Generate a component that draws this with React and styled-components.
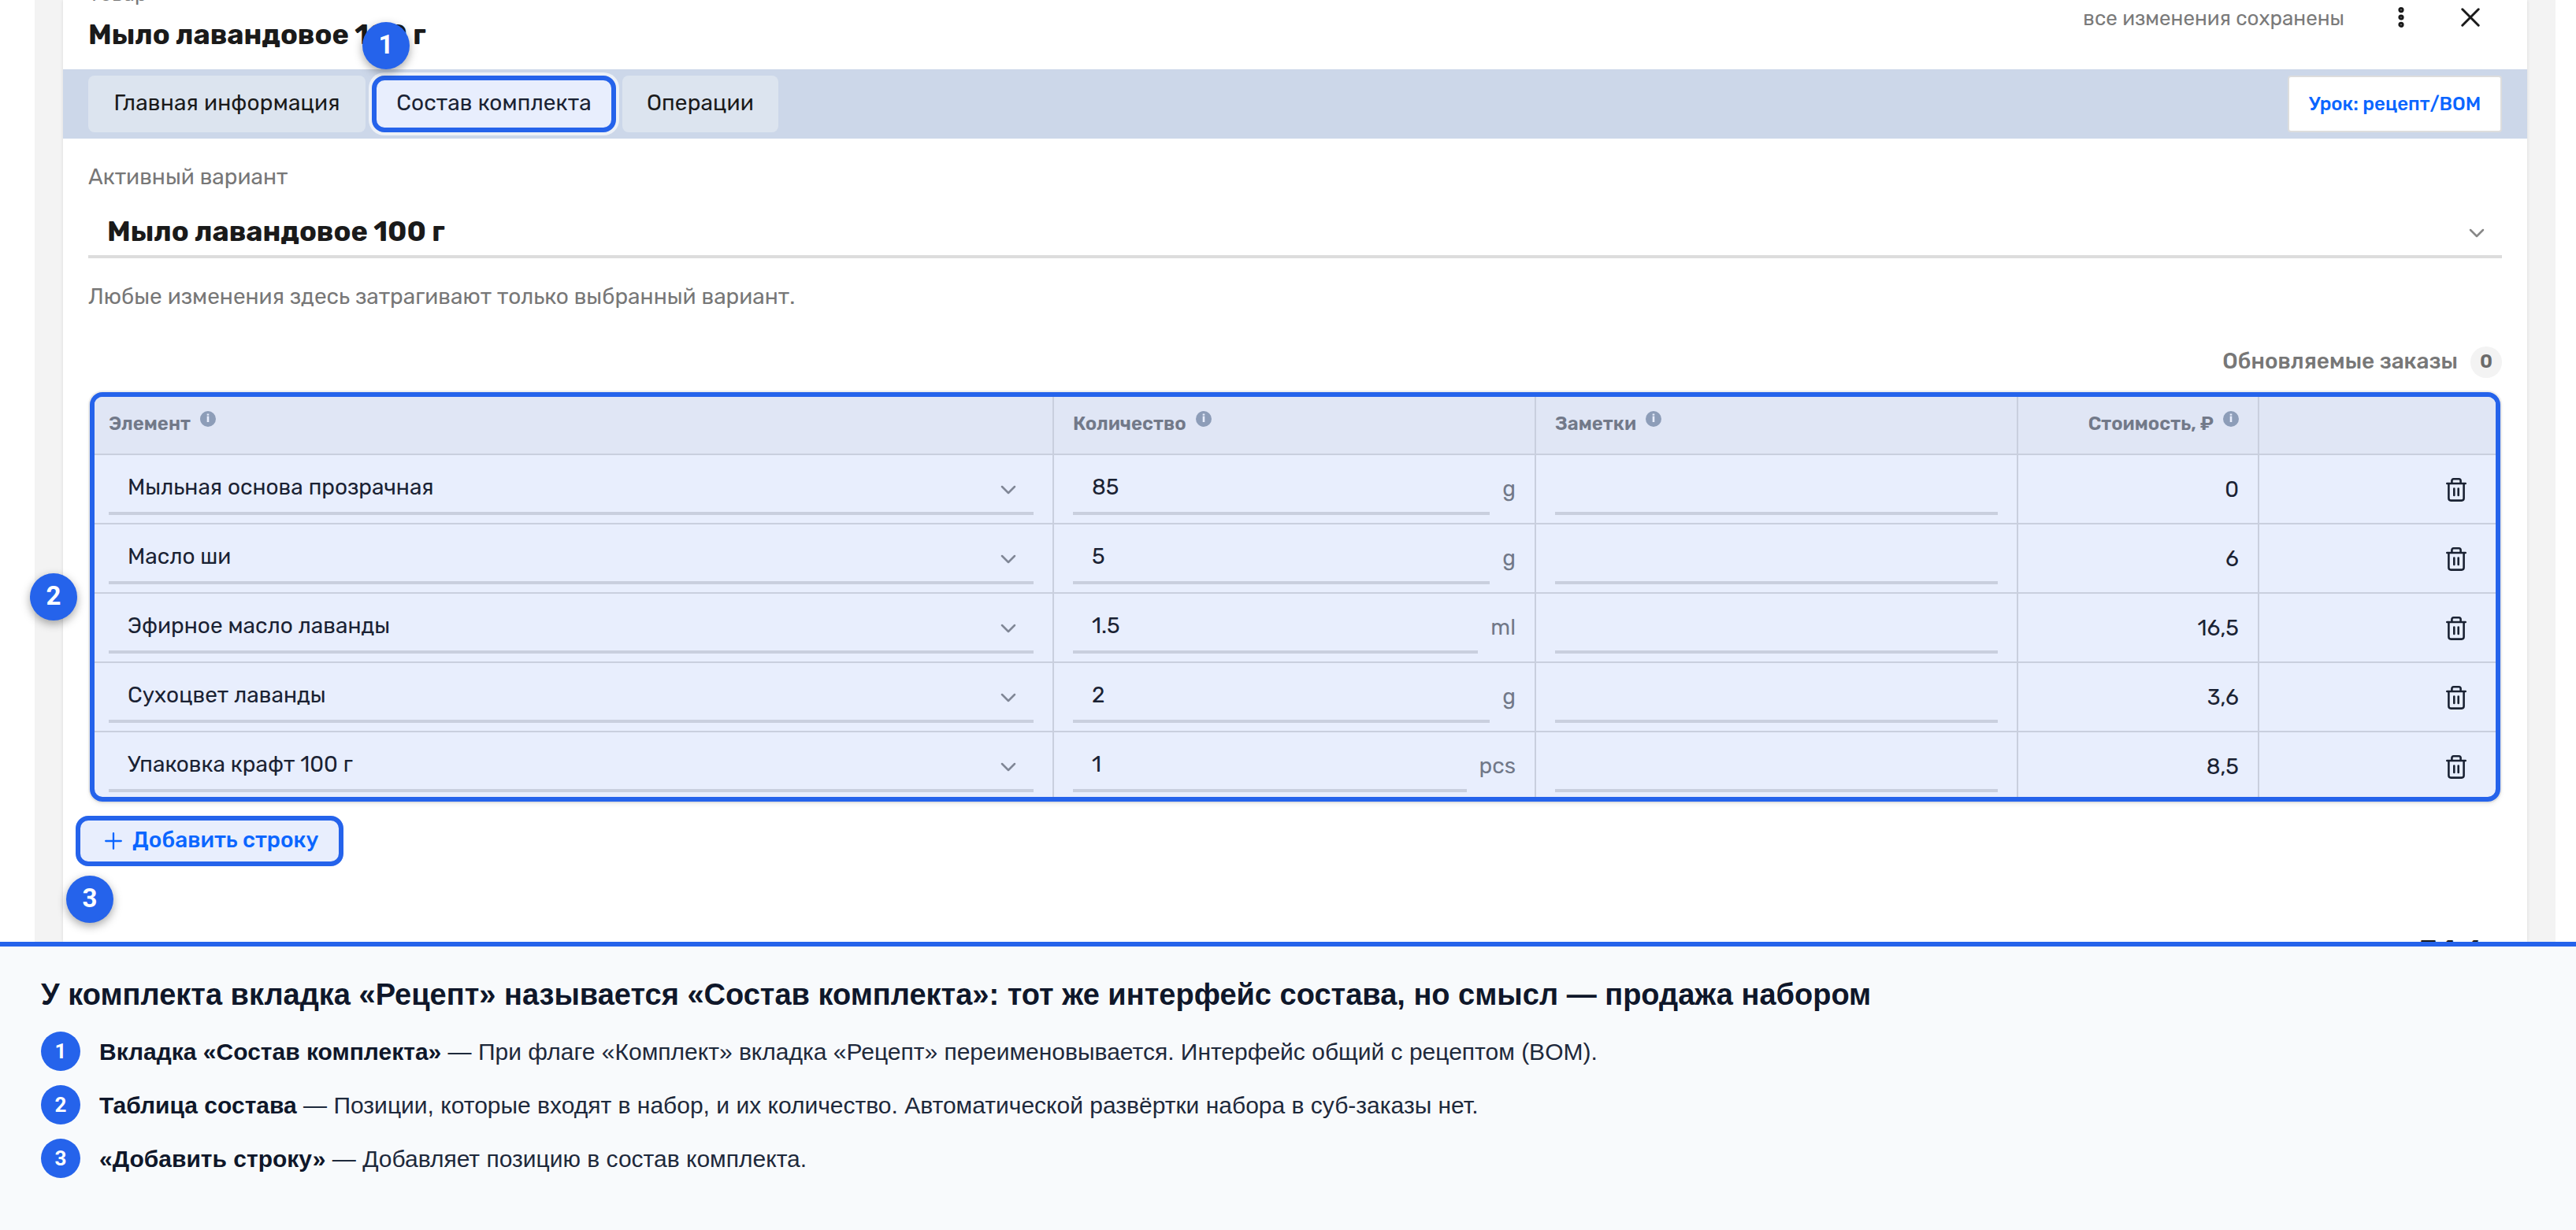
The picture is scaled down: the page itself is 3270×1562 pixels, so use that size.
import styled, { createGlobalStyle } from 'styled-components'

const GlobalStyle = createGlobalStyle`
  * { box-sizing: border-box; }
  body {
    margin: 0;
    background: #fff;
    font-family: Rubik, Roboto, sans-serif;
    font-size: 28px;
    line-height: 40px;
    color: #1a1a1a;
  }
`

const Page = styled.div`
  display: flex;
  flex-direction: column;
  height: 1562px;
  overflow: hidden;
`
const Screen = styled.div`
  display: flex;
  height: 1196px;
  margin: 0 26px 0 44px;
  padding: 0 36px;
  background: #f3f3f3;
`
const Card = styled.div`
  flex: 1;
  height: 1196px;
  background: #fff;
  box-shadow: 0 0 4px rgba(0, 0, 0, 0.1);
  clip-path: inset(0 -80px 0 -80px);
`

const Header = styled.header`
  display: flex;
  justify-content: space-between;
  align-items: flex-start;
  height: 88px;
  padding: 0 28px 0 32px;
`
const Heading = styled.div`
  margin-top: -23px;
`
const Kind = styled.div`
  margin-bottom: 13px;
  font-size: 26px;
  line-height: 32px;
  color: #777;
`
const Title = styled.h1`
  margin: 0;
  font-size: 36px;
  font-weight: 700;
  letter-spacing: -0.1px;
  line-height: 44px;
`
const HeaderActions = styled.div`
  display: flex;
  align-items: center;
  height: 44px;
`
const SaveState = styled.span`
  margin-right: 28px;
  padding-top: 3px;
  font-size: 26px;
  color: #7a7a7a;
`
const IconButton = styled.button`
  display: flex;
  align-items: center;
  justify-content: center;
  width: 88px;
  height: 44px;
  padding: 0;
  border: 0;
  background: none;
  color: #1a1a1a;
`

const TabBar = styled.nav`
  display: flex;
  gap: 8px;
  height: 88px;
  padding: 8px 32px;
  background: #ccd7e9;
`
const Tab = styled.div`
  position: relative;
  display: flex;
  align-items: center;
  justify-content: center;
  width: ${(p) => p.$width}px;
  height: 72px;
  padding-bottom: 2px;
  border-radius: 8px;
  background: #dce4ef;
  letter-spacing: 0.15px;
`
const ActiveTab = styled(Tab)`
  border: 6px solid #2563eb;
  border-radius: 16px;
  background: #e8eefd;
  box-shadow: 0 0 0 4px rgba(255, 255, 255, 0.65);
  color: #1a2233;
`
const LessonButton = styled.button`
  width: 272px;
  height: 72px;
  margin-left: auto;
  padding: 0;
  border: 2px solid #ddd;
  border-radius: 4px;
  background: #fff;
  font-family: inherit;
  font-size: 24px;
  font-weight: 500;
  color: #0b66ff;
`

const Marker = styled.span`
  position: absolute;
  left: ${(p) => p.$left}px;
  top: ${(p) => p.$top}px;
  z-index: 2;
  width: 60px;
  height: 60px;
  border-radius: 50%;
  background: #2563eb;
  box-shadow: 0 4px 12px rgba(0, 0, 0, 0.35);
  font-family: Roboto, sans-serif;
  font-size: 33px;
  font-weight: 700;
  letter-spacing: 0;
  line-height: 58px;
  text-align: center;
  color: #fff;
`

const Body = styled.main`
  padding: 29px 32px 0;
`
const Muted = styled.div`
  color: #777;
`
const VariantSelect = styled.div`
  display: flex;
  align-items: center;
  justify-content: space-between;
  height: 65px;
  margin: 18px 0 29px;
  padding: 0 22px 0 24px;
  border-bottom: 4px solid #ddd;
  font-size: 36px;
  font-weight: 700;
  letter-spacing: -0.1px;
`
const Orders = styled.div`
  display: flex;
  justify-content: flex-end;
  align-items: center;
  gap: 16px;
  height: 40px;
  margin: 43px 0 18px;
  font-weight: 500;
  color: #777;
`
const OrdersLabel = styled.span`
  padding-bottom: 3px;
`
const Count = styled.span`
  width: 40px;
  height: 40px;
  border-radius: 50%;
  background: #f3f3f3;
  font-size: 24px;
  font-weight: 600;
  line-height: 39px;
  text-align: center;
  color: #6b6b6b;
`

const TableWrap = styled.section`
  position: relative;
  margin: 0 2px;
`
const Table = styled.div`
  height: 520px;
  border: 6px solid #2563eb;
  border-radius: 16px;
  background: #e8eefd;
  box-shadow: 0 0 0 2px rgba(0, 0, 0, 0.06), 0 3px 6px rgba(0, 0, 0, 0.08);
  overflow: hidden;
`
const Row = styled.div`
  display: grid;
  grid-template-columns: 1218px 612px 612px 306px 1fr;
  height: ${(p) => (p.$head ? 74 : 88)}px;
  border-bottom: 2px solid #c9cfde;
  background: ${(p) => (p.$head ? '#e0e6f5' : 'transparent')};
`
const Cell = styled.div`
  display: flex;
  align-items: ${(p) => (p.$center ? 'center' : 'flex-start')};
  justify-content: ${(p) => (p.$end ? 'flex-end' : 'flex-start')};
  gap: 16px;
  padding: ${(p) => (p.$center ? 1 : 0)}px 24px 0;
  border-right: 2px solid #c9cfde;
  color: #1a2233;
  &:first-child { padding-left: 18px; }
  &:last-child { padding-right: 37px; border-right: 0; }
`
const HeadCell = styled(Cell)`
  align-items: center;
  gap: 12px;
  padding-bottom: 4px;
  font-size: 24px;
  font-weight: 600;
  color: #727989;
  svg { margin-top: -12px; }
`
const Field = styled.div`
  display: flex;
  flex: 1;
  align-items: center;
  justify-content: space-between;
  height: 76px;
  padding: 10px 22px 0 24px;
  border-bottom: 4px solid #c9cfde;
`
const Unit = styled.span`
  padding-top: 23px;
  color: #717888;
`

const AddRow = styled.button`
  position: relative;
  display: flex;
  align-items: center;
  gap: 13px;
  width: 340px;
  height: 64px;
  margin: 18px 0 0 -16px;
  padding: 0 0 0 31px;
  border: 6px solid #2563eb;
  border-radius: 16px;
  background: #e8eefd;
  font-family: inherit;
  font-size: 28px;
  font-weight: 500;
  color: #0b66ff;
`
const AddLabel = styled.span`
  padding-bottom: 3px;
`
const Total = styled.div`
  margin-top: 85px;
  padding-right: 24px;
  font-size: 36px;
  font-weight: 700;
  line-height: 44px;
  text-align: right;
`

const Legend = styled.footer`
  position: relative;
  z-index: 1;
  height: 366px;
  padding: 39px 52px 0;
  border-top: 6px solid #2563eb;
  background: #f8fafc;
  font-family: "Liberation Sans", Arial, sans-serif;
  color: #1e293b;
`
const LegendTitle = styled.h2`
  margin: 0 0 25px;
  font-size: 38px;
  line-height: 44px;
  color: #0f172a;
`
const LegendItem = styled.div`
  display: flex;
  align-items: center;
  gap: 24px;
  height: 50px;
  margin-bottom: 18px;
  font-size: 30px;
  b { color: #0f172a; }
`
const LegendText = styled.span`
  padding-top: 1px;
`
const LegendNumber = styled.span`
  width: 50px;
  height: 50px;
  border-radius: 50%;
  background: #2563eb;
  font-family: Roboto, sans-serif;
  font-size: 26px;
  font-weight: 700;
  line-height: 50px;
  text-align: center;
  color: #fff;
`

const DotsIcon = () => (
  <svg width="8" height="28" viewBox="0 0 8 28" fill="none" stroke="currentColor" strokeWidth="3">
    <circle cx="4" cy="4.6" r="2.1" />
    <circle cx="4" cy="14" r="2.1" />
    <circle cx="4" cy="23.3" r="2.1" />
  </svg>
)

const CloseIcon = () => (
  <svg width="24" height="24" viewBox="0 0 24 24" stroke="currentColor" strokeWidth="3" strokeLinecap="round">
    <path d="M1.8 1.8l20.4 20.4M22.2 1.8L1.8 22.2" />
  </svg>
)

const ChevronIcon = styled(({ className }) => (
  <svg className={className} width="20" height="12" viewBox="0 0 20 12" fill="none" stroke="currentColor" strokeWidth="2.5" strokeLinecap="round" strokeLinejoin="round">
    <path d="M2 2l8 8 8-8" />
  </svg>
))`
  margin-top: ${(p) => p.$shift || 5}px;
  color: ${(p) => p.$color || '#808796'};
`

const InfoIcon = () => (
  <svg width="20" height="20" viewBox="0 0 20 20">
    <circle cx="10" cy="10" r="10" fill="#8d9db8" />
    <path d="M8.7 3.4h2.6v2H8.7zM8.7 6.4h2.6v7.6H8.7z" fill="#e8eefd" />
  </svg>
)

const TrashIcon = () => (
  <svg width="26" height="30" viewBox="0 0 26 30" fill="none" stroke="currentColor" strokeWidth="2.6" strokeLinecap="round">
    <path d="M1.3 7h23.4M7.4 6.8V3.6q0-2.3 2.3-2.3h6.6q2.3 0 2.3 2.3v3.2" />
    <path d="M3.4 7.2v18.6q0 2.8 2.8 2.8h13.6q2.8 0 2.8-2.8V7.2M10.3 13.5v8.4M15.7 13.5v8.4" />
  </svg>
)

const PlusIcon = () => (
  <svg width="22" height="22" viewBox="0 0 22 22" stroke="currentColor" strokeWidth="2.3" strokeLinecap="round">
    <path d="M11 1.2v19.6M1.2 11h19.6" />
  </svg>
)

const rows = [
  { name: 'Мыльная основа прозрачная', qty: '85', unit: 'g', cost: '0' },
  { name: 'Масло ши', qty: '5', unit: 'g', cost: '6' },
  { name: 'Эфирное масло лаванды', qty: '1.5', unit: 'ml', cost: '16,5' },
  { name: 'Сухоцвет лаванды', qty: '2', unit: 'g', cost: '3,6' },
  { name: 'Упаковка крафт 100 г', qty: '1', unit: 'pcs', cost: '8,5' },
]

const legend = [
  ['Вкладка «Состав комплекта»', 'При флаге «Комплект» вкладка «Рецепт» переименовывается. Интерфейс общий с рецептом (BOM).'],
  ['Таблица состава', 'Позиции, которые входят в набор, и их количество. Автоматической развёртки набора в суб-заказы нет.'],
  ['«Добавить строку»', 'Добавляет позицию в состав комплекта.'],
]

export default function App() {
  return (
    <Page>
      <GlobalStyle />
      <Screen>
        <Card>
          <Header>
            <Heading>
              <Kind>Товар</Kind>
              <Title>Мыло лавандовое 100 г</Title>
            </Heading>
            <HeaderActions>
              <SaveState>все изменения сохранены</SaveState>
              <IconButton><DotsIcon /></IconButton>
              <IconButton><CloseIcon /></IconButton>
            </HeaderActions>
          </Header>
          <TabBar>
            <Tab $width={352}>Главная информация</Tab>
            <ActiveTab $width={310}>
              Состав комплекта
              <Marker $left={-18} $top={-74}>1</Marker>
            </ActiveTab>
            <Tab $width={198}>Операции</Tab>
            <LessonButton>Урок: рецепт/BOM</LessonButton>
          </TabBar>
          <Body>
            <Muted>Активный вариант</Muted>
            <VariantSelect>
              Мыло лавандовое 100 г
              <ChevronIcon $color="#888" />
            </VariantSelect>
            <Muted>Любые изменения здесь затрагивают только выбранный вариант.</Muted>
            <Orders>
              <OrdersLabel>Обновляемые заказы</OrdersLabel>
              <Count>0</Count>
            </Orders>
            <TableWrap>
              <Table>
                <Row $head>
                  <HeadCell>Элемент <InfoIcon /></HeadCell>
                  <HeadCell>Количество <InfoIcon /></HeadCell>
                  <HeadCell>Заметки <InfoIcon /></HeadCell>
                  <HeadCell $end>Стоимость, ₽ <InfoIcon /></HeadCell>
                  <HeadCell />
                </Row>
                {rows.map((row) => (
                  <Row key={row.name}>
                    <Cell><Field>{row.name}<ChevronIcon $shift={6} /></Field></Cell>
                    <Cell>
                      <Field>{row.qty}</Field>
                      <Unit>{row.unit}</Unit>
                    </Cell>
                    <Cell><Field /></Cell>
                    <Cell $center $end>{row.cost}</Cell>
                    <Cell $center $end><TrashIcon /></Cell>
                  </Row>
                ))}
              </Table>
              <Marker $left={-76} $top={230}>2</Marker>
            </TableWrap>
            <AddRow>
              <PlusIcon />
              <AddLabel>Добавить строку</AddLabel>
              <Marker $left={-18} $top={70}>3</Marker>
            </AddRow>
            <Total>34,6</Total>
          </Body>
        </Card>
      </Screen>
      <Legend>
        <LegendTitle>У комплекта вкладка «Рецепт» называется «Состав комплекта»: тот же интерфейс состава, но смысл — продажа набором</LegendTitle>
        {legend.map(([name, text], i) => (
          <LegendItem key={name}>
            <LegendNumber>{i + 1}</LegendNumber>
            <LegendText><b>{name}</b> — {text}</LegendText>
          </LegendItem>
        ))}
      </Legend>
    </Page>
  )
}
